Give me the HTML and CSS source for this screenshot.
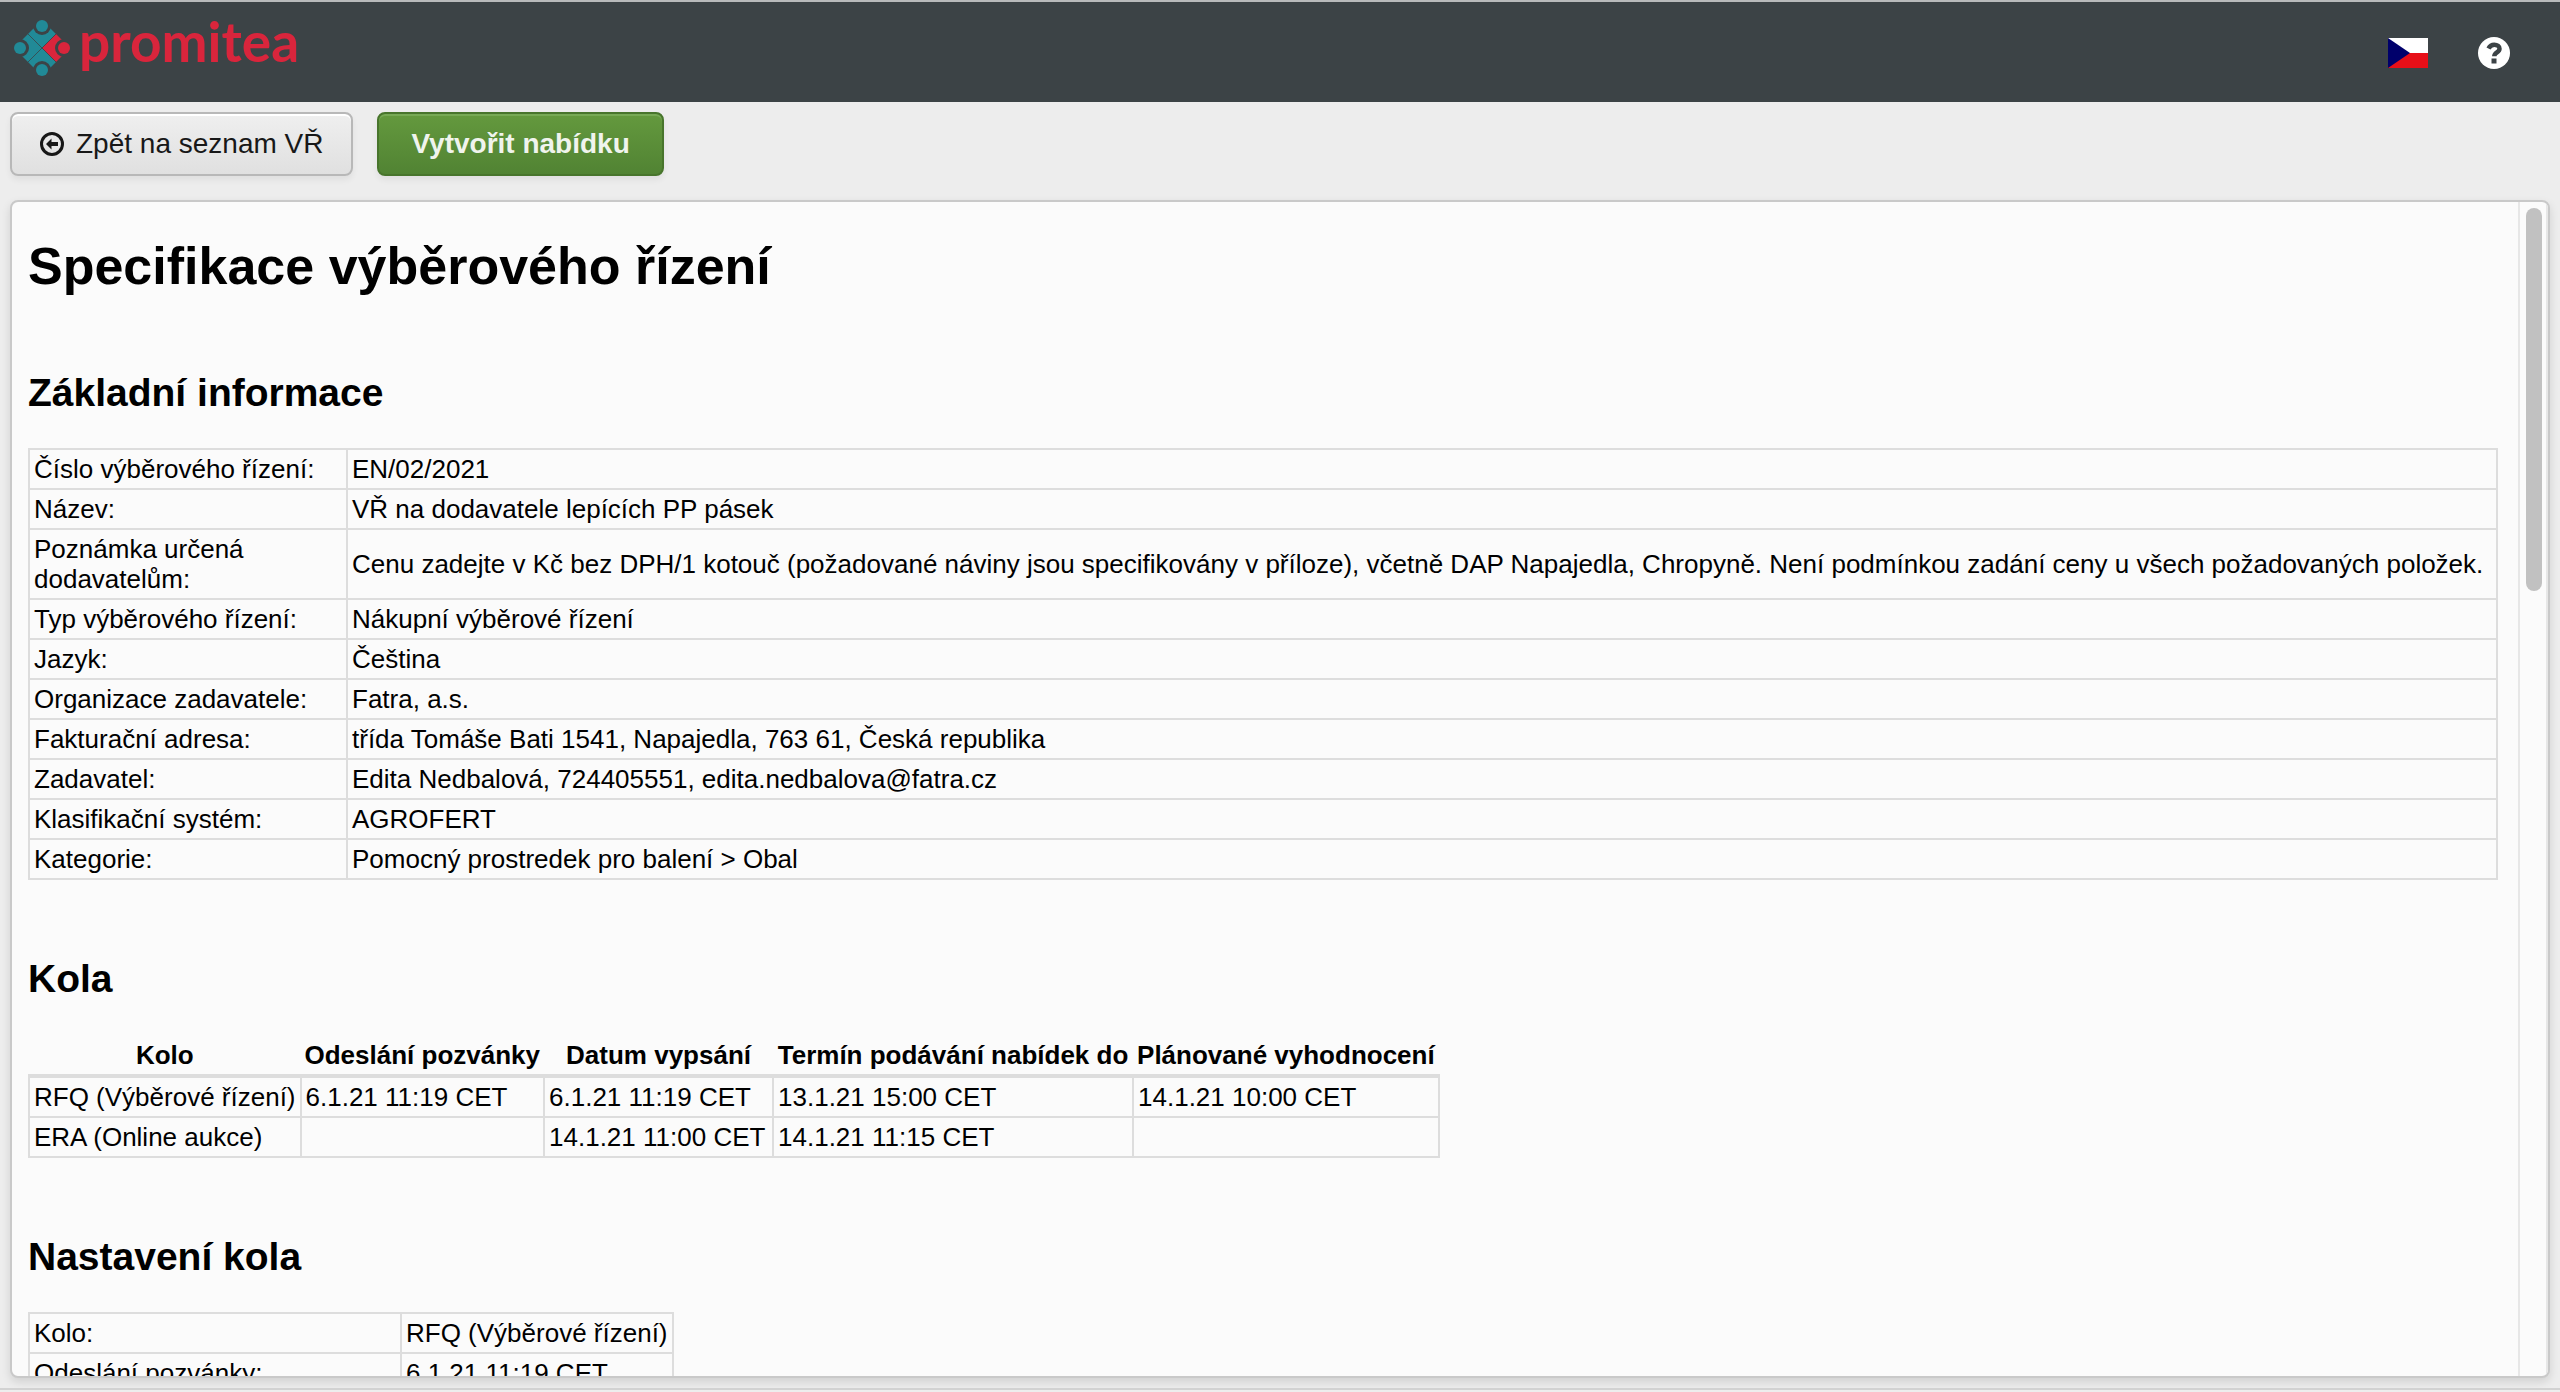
FILE: index.html
```html
<!DOCTYPE html>
<html lang="cs">
<head>
<meta charset="utf-8">
<title>Specifikace výběrového řízení</title>
<link rel="stylesheet" href="styles.css">
</head>
<body>
<header class="topbar">
  <a class="logo" href="#">
    <svg class="logo-mark" viewBox="0 0 56 56" aria-hidden="true">
      <defs>
        <mask id="heads">
          <rect width="56" height="56" fill="#fff"/>
          <g fill="#000"><circle cx="28" cy="6" r="9"/><circle cx="28" cy="50" r="9"/><circle cx="6" cy="28" r="9"/><circle cx="50" cy="28" r="9"/></g>
          <path d="M10 10 46 46M46 10 10 46" stroke="#000" stroke-width="0.800"/>
        </mask>
      </defs>
      <g mask="url(#heads)">
        <path d="M28 0 0 28 28 56 42 42 28 28 42 14Z" fill="#218a97"/>
        <path d="M28 28 42 14 56 28 42 42Z" fill="#d9253c"/>
      </g>
      <g fill="#218a97"><circle cx="28" cy="6" r="6"/><circle cx="28" cy="50" r="6"/><circle cx="6" cy="28" r="6"/></g>
      <circle cx="50" cy="28" r="6" fill="#d9253c"/>
    </svg>
    <span class="logo-text">promitea</span>
  </a>
  <nav class="tools">
    <a href="#" aria-label="Čeština"><svg class="flag" viewBox="0 0 40 30"><path d="M0 0h40v15H0z" fill="#fff"/><path d="M0 15h40v15H0z" fill="#e70f18"/><path d="M0 0l22 15L0 30z" fill="#00006b"/></svg></a>
    <a href="#" aria-label="Nápověda"><svg class="help" viewBox="0 0 32 32"><circle cx="16" cy="16" r="16" fill="#fff"/><path d="M10.500 11.500C12 8.500 14 7.700 16.300 7.700c3 0 5.200 1.700 5.200 4 0 3.800-5.200 3.600-5.200 7.600" fill="none" stroke="#3c4346" stroke-width="4.500"/><path d="M13.500 21.500h5v5h-5z" fill="#3c4346"/></svg></a>
  </nav>
</header>
<div class="actions">
  <button class="btn" type="button"><svg class="back" viewBox="0 0 24 24" aria-hidden="true"><circle cx="12" cy="12" r="10.500" fill="none" stroke="#181818" stroke-width="3"/><path d="M6 12l5.500-5.500v3.500H18v4h-6.500v3.500z" fill="#181818"/></svg>Zpět na seznam VŘ</button>
  <button class="btn primary" type="button">Vytvořit nabídku</button>
</div>
<main class="panel">
  <div class="content">
    <h1>Specifikace výběrového řízení</h1>
    <section>
      <h2>Základní informace</h2>
      <table class="info">
        <tr><td class="label">Číslo výběrového řízení:</td><td>EN/02/2021</td></tr>
        <tr><td class="label">Název:</td><td>VŘ na dodavatele lepících PP pásek</td></tr>
        <tr><td class="label">Poznámka určená dodavatelům:</td><td>Cenu zadejte v Kč bez DPH/1 kotouč (požadované náviny jsou specifikovány v příloze), včetně DAP Napajedla, Chropyně. Není podmínkou zadání ceny u všech požadovaných položek.</td></tr>
        <tr><td class="label">Typ výběrového řízení:</td><td>Nákupní výběrové řízení</td></tr>
        <tr><td class="label">Jazyk:</td><td>Čeština</td></tr>
        <tr><td class="label">Organizace zadavatele:</td><td>Fatra, a.s.</td></tr>
        <tr><td class="label">Fakturační adresa:</td><td>třída Tomáše Bati 1541, Napajedla, 763 61, Česká republika</td></tr>
        <tr><td class="label">Zadavatel:</td><td>Edita Nedbalová, 724405551, edita.nedbalova@fatra.cz</td></tr>
        <tr><td class="label">Klasifikační systém:</td><td>AGROFERT</td></tr>
        <tr><td class="label">Kategorie:</td><td>Pomocný prostredek pro balení &gt; Obal</td></tr>
      </table>
    </section>
    <section>
      <h2>Kola</h2>
      <table class="rounds">
        <thead><tr><th>Kolo</th><th>Odeslání pozvánky</th><th class="published">Datum vypsání</th><th class="deadline">Termín podávání nabídek do</th><th>Plánované vyhodnocení</th></tr></thead>
        <tbody>
          <tr><td>RFQ (Výběrové řízení)</td><td>6.1.21 11:19 CET</td><td>6.1.21 11:19 CET</td><td>13.1.21 15:00 CET</td><td>14.1.21 10:00 CET</td></tr>
          <tr><td>ERA (Online aukce)</td><td></td><td>14.1.21 11:00 CET</td><td>14.1.21 11:15 CET</td><td></td></tr>
        </tbody>
      </table>
    </section>
    <section>
      <h2>Nastavení kola</h2>
      <table class="settings">
        <tr><td class="label">Kolo:</td><td>RFQ (Výběrové řízení)</td></tr>
        <tr><td class="label">Odeslání pozvánky:</td><td>6.1.21 11:19 CET</td></tr>
      </table>
    </section>
  </div>
  <div class="scrollbar" aria-hidden="true"><div class="thumb"></div></div>
</main>
<footer class="bottom"></footer>
</body>
</html>
```

FILE: styles.css
```css
* { box-sizing: border-box; }
body {
  margin: 0;
  height: 100vh;
  display: flex;
  flex-direction: column;
  overflow: hidden;
  background: #ededed;
  color: #000;
  font: 26px/30px "Liberation Sans", Arial, sans-serif;
}
.topbar {
  flex: none;
  height: 102px;
  display: flex;
  justify-content: space-between;
  padding: 0 50px 0 14px;
  background: #3c4346;
  border-top: 2px solid #b8babb;
}
.logo { display: flex; align-items: flex-start; gap: 9px; padding-top: 18px; text-decoration: none; }
.logo-mark { width: 56px; height: 56px; }
.logo-text { color: #d9253c; font: bold 55px/42px Lato, sans-serif; }
.tools { display: flex; align-items: center; gap: 50px; padding-top: 2px; }
.tools a { display: flex; }
.flag { width: 40px; height: 30px; }
.help { width: 32px; height: 32px; }
.actions { flex: none; display: flex; gap: 24px; padding: 10px 10px 24px; }
.btn {
  display: flex;
  align-items: center;
  gap: 12px;
  height: 64px;
  padding: 0 28px;
  border: 2px solid #b8b8b8;
  border-radius: 8px;
  background: linear-gradient(#efefef, #e0e0e0);
  box-shadow: inset 0 2px 0 #fff, 0 4px 6px rgba(0, 0, 0, .06);
  color: #181818;
  font: 28px/32px "Liberation Sans", Arial, sans-serif;
}
.primary {
  padding: 0 32px;
  border-color: #48752c;
  background: linear-gradient(#64993e, #518333);
  box-shadow: inset 0 2px 0 #77a955, 0 4px 6px rgba(0, 0, 0, .06);
  color: #f0f4ed;
  font-weight: bold;
}
.back { width: 24px; height: 24px; }
.panel {
  flex: 1;
  min-height: 0;
  display: flex;
  margin: 0 10px;
  border: 2px solid #c9c9c9;
  border-radius: 8px;
  background: #fbfbfb;
  box-shadow: 0 4px 10px rgba(0, 0, 0, .12);
  overflow: hidden;
}
.content { flex: 1; min-width: 0; padding: 0 20px 0 16px; overflow: hidden; }
h1 { margin: 34px 0 41px; font-size: 52px; line-height: 60px; }
h2 { margin: 0 0 33px; padding-top: 33px; font-size: 39px; line-height: 45px; }
section { margin-bottom: 43px; }
table { border-collapse: collapse; }
td, th { padding: 4px; }
td { border: 2px solid #ddd; }
.info { width: 100%; }
.info .label { width: 318px; }
.rounds th { white-space: nowrap; padding-top: 6px; }
.rounds thead { border-bottom: 4px solid #ddd; }
.rounds .published { width: 229px; }
.rounds .deadline { width: 360px; }
.settings .label { width: 372px; }
.scrollbar {
  flex: none;
  width: 30px;
  padding: 6px;
  border: solid #e7e7e7;
  border-width: 0 2px;
}
.thumb { width: 16px; height: 33%; border-radius: 8px; background: #c1c1c1; }
.bottom { flex: none; height: 4px; margin-top: 10px; border-top: 2px solid #d2d2d2; }
```
